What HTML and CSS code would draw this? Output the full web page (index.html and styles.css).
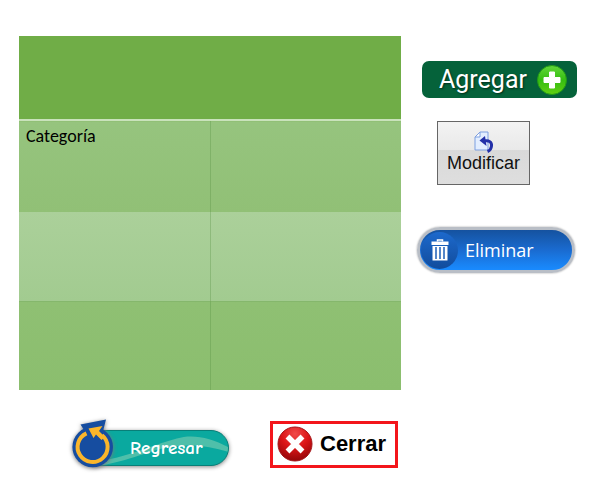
FILE: index.html
```html
<!DOCTYPE html>
<html lang="es">
<head>
<meta charset="utf-8">
<title>Categorías</title>
<link rel="stylesheet" href="styles.css">
</head>
<body>
<main class="page">
  <table class="grid" aria-label="Categorías">
    <thead><tr><th colspan="2"></th></tr></thead>
    <tbody>
      <tr class="row-first"><td>Categoría</td><td></td></tr>
      <tr class="row-light"><td></td><td></td></tr>
      <tr class="row-last"><td></td><td></td></tr>
    </tbody>
  </table>

  <div class="actions">
    <button type="button" class="btn add">
      <span>Agregar</span>
      <svg width="30" height="30" viewBox="0 0 30 30" aria-hidden="true">
        <defs><linearGradient id="lime" x1="0" y1="0" x2="0" y2="1"><stop offset="0" stop-color="#63d83a"/><stop offset=".5" stop-color="#35bd12"/><stop offset="1" stop-color="#62cf12"/></linearGradient></defs>
        <circle cx="15" cy="15" r="14.5" fill="url(#lime)" stroke="#239a17"/>
        <path d="M12.500 7h5v5.500H23v5h-5.500V23h-5v-5.500H7v-5h5.500z" fill="#fff" stroke="#fff" stroke-linejoin="round"/>
      </svg>
    </button>

    <button type="button" class="btn edit">
      <svg width="20" height="22" viewBox="0 0 20 22" aria-hidden="true">
        <path d="M6 1h8v18H1V6z" fill="#e3eeff" stroke="#7d9fe0"/>
        <path d="M6 1v5H1z" fill="#fff" stroke="#7d9fe0"/>
        <path d="M10 10c5-1 8 1 7.500 5-.2 2.500-1.500 4.500-4 5.500" fill="none" stroke="#2330a8" stroke-width="3"/>
        <path d="M5.500 9.500L11 5l1.500 10z" fill="#2330a8"/>
      </svg>
      <span>Modificar</span>
    </button>

    <button type="button" class="btn delete">
      <span class="disc">
        <svg width="18" height="22" viewBox="0 0 18 22" aria-hidden="true">
          <path d="M6.500 2.500V1h5v1.500" fill="none" stroke="#fff" stroke-width="1.500"/>
          <path d="M0.500 2.500h17V6h-17z" fill="#fff"/>
          <path d="M1.500 7h15v14.500h-15z" fill="#fff"/>
          <path d="M5 8v12M9 8v12M13 8v12" stroke="#1c5fb8" stroke-width="1.500"/>
        </svg>
      </span>
      <span>Eliminar</span>
    </button>
  </div>

  <div class="footer">
    <button type="button" class="btn back">
      <svg class="back-icon" width="42" height="50" viewBox="0 0 42 50" aria-hidden="true">
        <circle cx="20.700" cy="28" r="20.300" fill="#164da0"/>
        <path d="M8.500 5.500L34 .5 31 12 22 20 9 16l3-5z" fill="#164da0"/>
        <path d="M30 16.300A15 15 0 1 1 14.500 14.300" fill="none" stroke="#fbb62b" stroke-width="4"/>
        <path d="M16.500 9.500L30.500 7l-3.500 5 6 6-3.500 3-5.500-5.500-2.500 3.500z" fill="#fbb62b"/>
      </svg>
      <span class="pill">
        <svg class="wave" viewBox="0 0 136 36" preserveAspectRatio="none" aria-hidden="true">
          <path d="M10 36C42 30 58 19 84 16c20-2 36 1 52 6v-5C118 7 100 3 84 8 56 16 34 28 0 33v3z" fill="#4fbfaa"/>
        </svg>
        <span class="back-label">Regresar</span>
      </span>
    </button>

    <button type="button" class="btn close">
      <svg width="36" height="36" viewBox="0 0 36 36" aria-hidden="true">
        <defs><radialGradient id="red" cx=".5" cy=".2" r=".8"><stop offset="0" stop-color="#f04a48"/><stop offset=".5" stop-color="#dc1517"/><stop offset="1" stop-color="#930609"/></radialGradient></defs>
        <circle cx="18" cy="18" r="17" fill="url(#red)" stroke="#a51518"/>
        <path d="M10.500 10.500l15 15M25.500 10.500l-15 15" stroke="#fff" stroke-width="5.500"/>
      </svg>
      <span>Cerrar</span>
    </button>
  </div>
</main>
</body>
</html>
```
FILE: styles.css
```css
* {
  box-sizing: border-box;
}

body {
  margin: 0;
  background: #fff;
  font-family: "Liberation Sans", Arial, sans-serif;
}

.page {
  display: grid;
  grid-template-columns: 1fr 160px;
  column-gap: 16px;
  row-gap: 29px;
  padding: 36px 15px 20px 19px;
}

.grid {
  width: 100%;
  border-collapse: collapse;
  table-layout: fixed;
  font: 18px/22px Carlito, Lato, sans-serif;
  color: #000;
}

.grid th,
.grid td {
  padding: 4px 7px;
  text-align: left;
  vertical-align: top;
}

.grid th {
  height: 84px;
  background: #70ad47;
}

.grid td {
  height: 89px;
}

.grid td + td {
  border-left: 1px solid rgba(80, 140, 60, 0.3);
}

.row-first {
  border-top: 2px solid #c9e2bb;
  background: linear-gradient(#96c47e, #91c076);
}

.grid .row-first td {
  height: 92px;
}

.row-light {
  background: linear-gradient(#abd09a, #a2cb90);
}

.row-last {
  border-top: 1px solid #85b76c;
  background: linear-gradient(#8fc073, #8bbe6e);
}

.actions {
  display: flex;
  flex-direction: column;
  align-items: flex-start;
  padding-top: 25px;
}

.btn {
  display: flex;
  align-items: center;
  margin: 0;
  padding: 0;
  border: 0;
  background: none;
  font-family: inherit;
  cursor: pointer;
}

.btn svg {
  flex: none;
}

.add {
  align-self: stretch;
  justify-content: space-between;
  height: 37px;
  margin-left: 5px;
  padding: 0 10px 0 17px;
  border-radius: 7px;
  background: #05623a;
  color: #fff;
  font-family: Roboto, sans-serif;
  font-size: 25px;
  text-shadow: 1px 1px 2px #022d1a;
}

.edit {
  flex-direction: column;
  justify-content: center;
  height: 64px;
  margin: 23px 0 0 20px;
  padding: 3px 9px 6px;
  border: 1px solid #666;
  background: linear-gradient(#f3f3f3, #e9e9e9 45%, #d9d9d9 46%, #dedede);
  color: #111;
  font-size: 18px;
  line-height: 20px;
}

.delete {
  width: 158px;
  height: 46px;
  margin-top: 42px;
  gap: 7px;
  padding-left: 1px;
  border: 3px solid #b9bec6;
  border-radius: 23px;
  background: linear-gradient(#15529f, #1a6bd0 50%, #198bff);
  box-shadow: 0 0 2px #999;
  color: #fff;
  font-family: "Open Sans", sans-serif;
  font-size: 18px;
  font-weight: 500;
}

.disc {
  display: grid;
  place-items: center;
  width: 37px;
  height: 37px;
  border-radius: 50%;
  background: linear-gradient(#1c69cc, #124c9c);
}

.footer {
  grid-column: 1 / -1;
  display: flex;
  align-items: center;
  gap: 41px;
  padding-left: 53px;
}

.back-icon {
  position: relative;
  z-index: 1;
  filter: drop-shadow(0 1px 2px #777);
}

.pill {
  position: relative;
  display: flex;
  align-items: center;
  width: 136px;
  height: 36px;
  margin: 8px 0 0 -21px;
  padding-left: 36px;
  overflow: hidden;
  border: 1px solid #087f78;
  border-radius: 0 18px 18px 0;
  background: #0aa99f;
  box-shadow: 0 1px 4px #888;
  color: #fff;
  font: bold 19px/22px "Comic Neue", "Comic Sans MS", cursive;
}

.wave {
  position: absolute;
  inset: 0;
  width: 100%;
  height: 100%;
}

.back-label {
  position: relative;
}

.close {
  gap: 7px;
  height: 47px;
  padding: 0 9px 0 4px;
  border: 3px solid #f3161b;
  background: #fff;
  color: #000;
  font-size: 22px;
  font-weight: bold;
}
```
